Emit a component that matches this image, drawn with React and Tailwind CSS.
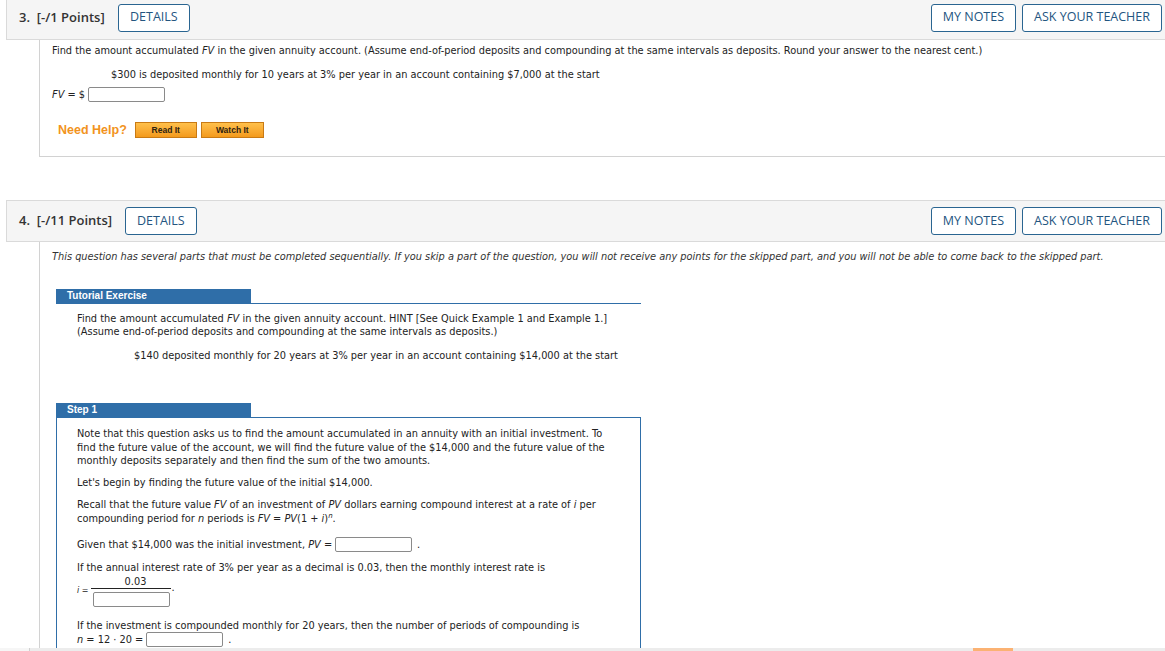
const body = "font-['DejaVu_Sans',Verdana,sans-serif] text-[9.8px] text-[#222]"

function Btn({ children }) {
  return (
    <button className="h-[28px] px-[11px] rounded-[3px] border border-[#2a6591] bg-white text-[#24557f] text-[12.5px] font-['Open_Sans',sans-serif] leading-none">
      {children}
    </button>
  )
}

function Header({ num, pts, labelW }) {
  return (
    <div className="flex items-center h-full pl-[12px] pr-[3px]">
      <span className={`${labelW} font-['Open_Sans',sans-serif] font-semibold text-[13px] text-[#333] whitespace-nowrap`}>
        {num}.&nbsp; [-/{pts} Points]
      </span>
      <Btn>DETAILS</Btn>
      <div className="ml-auto flex gap-[6px]">
        <Btn>MY NOTES</Btn>
        <Btn>ASK YOUR TEACHER</Btn>
      </div>
    </div>
  )
}

function Box({ w }) {
  return <span className={`inline-block align-middle h-[15px] ${w} border border-[#8a8a8a] rounded-[2px] bg-white`} />
}

function OrangeBtn({ children, w }) {
  return (
    <span className={`inline-flex items-center justify-center h-[16px] ${w} border border-[#c97a14] bg-gradient-to-b from-[#ffc04a] to-[#f39a1b] text-[8.5px] font-bold text-[#2e2210] font-['Liberation_Sans',Arial,sans-serif]`}>
      {children}
    </span>
  )
}

function Tab({ children }) {
  return (
    <div className="w-[195px] h-[14px] bg-[#2f6ea8] text-white font-bold text-[10px] font-['Liberation_Sans',Arial,sans-serif] pl-[11px] leading-[14px]">
      {children}
    </div>
  )
}

export default function App() {
  return (
    <div className="w-[1165px] h-[651px] overflow-hidden bg-white relative">
      {/* Question 3 */}
      <div className="ml-[6px] mt-[-4px] h-[44px] bg-[#f5f5f5] border-l border-b border-[#dadada]">
        <Header num="3" pts="1" labelW="w-[99px]" />
      </div>
      <div className={`ml-[39px] h-[117px] border-l border-b border-[#d2d2d2] pl-[12px] pt-[4px] ${body}`}>
        <p className="leading-[13px]">
          Find the amount accumulated <i>FV</i> in the given annuity account. (Assume end-of-period deposits and compounding at the same intervals as deposits. Round your answer to the nearest cent.)
        </p>
        <p className="leading-[13px] mt-[11px] pl-[59px]">
          $300 is deposited monthly for 10 years at 3% per year in an account containing $7,000 at the start
        </p>
        <div className="mt-[6px] flex items-center gap-[3px] leading-[15px]">
          <span><i>FV</i> = $</span>
          <Box w="w-[77px]" />
        </div>
        <div className="mt-[19px] ml-[6px] flex items-center gap-[4px]">
          <span className="font-['Liberation_Sans',Arial,sans-serif] font-bold text-[12.5px] text-[#f29320] mr-[4px]">Need Help?</span>
          <OrangeBtn w="w-[62px]">Read It</OrangeBtn>
          <OrangeBtn w="w-[63px]">Watch It</OrangeBtn>
        </div>
      </div>

      {/* Question 4 */}
      <div className="ml-[6px] mt-[43px] h-[42px] bg-[#f5f5f5] border-l border-t border-b border-[#dadada]">
        <Header num="4" pts="11" labelW="w-[106px]" />
      </div>
      <div className={`ml-[39px] h-[420px] border-l border-[#d2d2d2] pl-[12px] pt-[8px] ${body}`}>
        <p className="italic leading-[13px] text-[#333]">
          This question has several parts that must be completed sequentially. If you skip a part of the question, you will not receive any points for the skipped part, and you will not be able to come back to the skipped part.
        </p>

        <div className="ml-[4px] mt-[26px] w-[585px]">
          <div className="border-b border-[#2f6ea8]">
            <Tab>Tutorial Exercise</Tab>
          </div>
          <div className="pl-[21px] pt-[8px] leading-[13px]">
            <p>Find the amount accumulated <i>FV</i> in the given annuity account. HINT [See Quick Example 1 and Example 1.]</p>
            <p>(Assume end-of-period deposits and compounding at the same intervals as deposits.)</p>
            <p className="pl-[57px] mt-[11px]">$140 deposited monthly for 20 years at 3% per year in an account containing $14,000 at the start</p>
          </div>

          <div className="mt-[41px]">
            <Tab>Step 1</Tab>
            <div className="border border-[#2f6ea8] h-[260px] pl-[20px] pt-[9px] pr-[28px] leading-[13.5px]">
              <p>
                Note that this question asks us to find the amount accumulated in an annuity with an initial investment. To find the future value of the account, we will find the future value of the $14,000 and the future value of the monthly deposits separately and then find the sum of the two amounts.
              </p>
              <p className="mt-[8px]">Let's begin by finding the future value of the initial $14,000.</p>
              <p className="mt-[9px]">
                Recall that the future value <i>FV</i> of an investment of <i>PV</i> dollars earning compound interest at a rate of <i>i</i> per compounding period for <i>n</i> periods is <i>FV</i> = <i>PV</i>(1 + <i>i</i>)<sup className="italic text-[7px] leading-none">n</sup>.
              </p>
              <div className="mt-[12px] flex items-center gap-[3px]">
                <span>Given that $14,000 was the initial investment, <i>PV</i> =</span>
                <Box w="w-[77px]" />
                <span className="ml-[2px]">.</span>
              </div>
              <p className="mt-[9px]">If the annual interest rate of 3% per year as a decimal is 0.03, then the monthly interest rate is</p>
              <div className="flex items-center">
                <span className="text-[8px] mr-[3px] mt-[1px]"><i>i</i> =</span>
                <div className="flex flex-col items-center w-[80px]">
                  <span className="leading-[13px] ml-[8px]">0.03</span>
                  <div className="w-full border-t border-[#222] pt-[3px] flex justify-center">
                    <Box w="w-[77px]" />
                  </div>
                </div>
                <span className="self-center mb-[6px]">.</span>
              </div>
              <p className="mt-[12px]">If the investment is compounded monthly for 20 years, then the number of periods of compounding is</p>
              <div className="flex items-center gap-[3px]">
                <span><i>n</i> = 12 · 20 =</span>
                <Box w="w-[77px]" />
                <span className="ml-[2px]">.</span>
              </div>
            </div>
          </div>
        </div>
      </div>

      {/* horizontal scrollbar strip */}
      <div className="absolute left-0 right-0 bottom-0 h-[3px] bg-[#ececec] flex">
        <div className="w-[30px] bg-[#f6f6f6] border-r border-[#d0d0d0]" />
        <div className="ml-[943px] w-[40px] bg-[#fbb273]" />
      </div>
    </div>
  )
}
